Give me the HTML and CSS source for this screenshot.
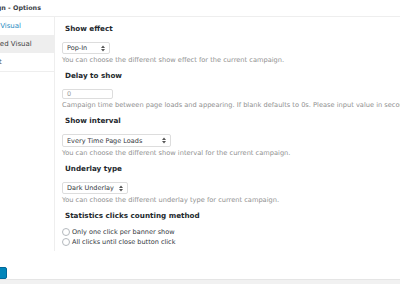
FILE: index.html
```html
<!DOCTYPE html>
<html>
<head>
<meta charset="utf-8">
<link rel="stylesheet" href="styles.css">
</head>
<body>
<div class="box">
  <div class="box-head">Campaign - Options</div>
  <div class="box-body">
    <aside class="tabs">
      <ul class="tab-list">
        <li class="tab tab-link">Simple Visual</li>
        <li class="tab tab-active">Advanced Visual</li>
        <li class="tab">Content</li>
      </ul>
    </aside>
    <main class="panel">
      <section class="field">
        <h4 class="label">Show effect</h4>
        <div class="select w-effect"><span>Pop-In</span><svg class="arrows" viewBox="0 0 4 7" width="4" height="7"><path d="M0 3 L2 0.5 L4 3 Z M0 4 L2 6.5 L4 4 Z" fill="#555"/></svg></div>
        <p class="desc">You can choose the different show effect for the current campaign.</p>
      </section>
      <section class="field">
        <h4 class="label">Delay to show</h4>
        <div class="input w-delay">0</div>
        <p class="desc">Campaign time between page loads and appearing. If blank defaults to 0s. Please input value in seconds.</p>
      </section>
      <section class="field">
        <h4 class="label">Show interval</h4>
        <div class="select w-interval tall"><span>Every Time Page Loads</span><svg class="arrows" viewBox="0 0 4 7" width="4" height="7"><path d="M0 3 L2 0.5 L4 3 Z M0 4 L2 6.5 L4 4 Z" fill="#555"/></svg></div>
        <p class="desc">You can choose the different show interval for the current campaign.</p>
      </section>
      <section class="field">
        <h4 class="label">Underlay type</h4>
        <div class="select w-underlay"><span>Dark Underlay</span><svg class="arrows" viewBox="0 0 4 7" width="4" height="7"><path d="M0 3 L2 0.5 L4 3 Z M0 4 L2 6.5 L4 4 Z" fill="#555"/></svg></div>
        <p class="desc">You can choose the different underlay type for current campaign.</p>
      </section>
      <section class="field">
        <h4 class="label">Statistics clicks counting method</h4>
        <div class="radios">
          <label class="radio"><span class="dot"></span>Only one click per banner show</label>
          <label class="radio"><span class="dot"></span>All clicks until close button click</label>
        </div>
      </section>
    </main>
  </div>
  <div class="box-foot">
    <button class="btn">Save</button>
  </div>
</div>
</body>
</html>
```
FILE: styles.css
```css
html, body {
  margin: 0;
  padding: 0;
}
body {
  background: #f1f1f1;
  font-family: "DejaVu Sans", Verdana, sans-serif;
  overflow: hidden;
  width: 400px;
  height: 284px;
}
.box {
  margin-left: -40px;
  width: 460px;
  height: 279px;
  background: #fff;
  border-bottom: 1px solid #e5e5e5;
  display: flex;
  flex-direction: column;
}
.box-head {
  height: 16px;
  border-bottom: 1px solid #eeeeee;
  padding-left: 10px;
  font-size: 6.4px;
  font-weight: bold;
  color: #3c4146;
  line-height: 16px;
}
.box-body {
  display: flex;
  height: 236px;
}
.tabs {
  width: 94px;
  border-right: 1px solid #eeeeee;
  background: #fff;
}
.tab-list {
  list-style: none;
  margin: 0;
  padding: 0;
  border-bottom: 1px solid #eeeeee;
}
.tab {
  height: 18px;
  line-height: 18px;
  padding-left: 14px;
  font-size: 7px;
  color: #555;
  white-space: nowrap;
}
.tab-link {
  color: #2a8bc2;
}
.tab-active {
  background: #eeeeee;
  color: #444;
}
.panel {
  flex: 1;
  padding: 7px 0 0 7px;
}
.field + .field {
  margin-top: 7px;
}
.label {
  margin: 0 0 8px 3px;
  font-size: 7.2px;
  line-height: 10px;
  font-weight: bold;
  color: #23282d;
}
.select, .input {
  box-sizing: border-box;
  height: 12px;
  border: 1px solid #dddddd;
  border-radius: 2px;
  background: #fff;
  display: flex;
  align-items: center;
  justify-content: space-between;
  padding: 0 4px 0 4px;
  font-size: 6.5px;
  color: #32373c;
  white-space: nowrap;
}
.select.tall {
  height: 13px;
}
.input {
  height: 10px;
  color: #a0a0a0;
}
.w-effect { width: 48px; }
.w-delay { width: 51px; }
.w-interval { width: 109px; }
.w-underlay { width: 66px; }
.arrows {
  display: block;
}
.desc {
  margin: 2px 0 0 0;
  font-size: 6.65px;
  line-height: 8px;
  color: #909090;
  white-space: nowrap;
}
.radios {
  display: flex;
  flex-direction: column;
  margin-top: -2px;
}
.radio {
  display: flex;
  align-items: center;
  gap: 2px;
  height: 10px;
  font-size: 6.5px;
  color: #32373c;
}
.dot {
  box-sizing: border-box;
  width: 8px;
  height: 8px;
  border-radius: 50%;
  border: 1px solid #b4b9be;
  background: #fff;
}
.box-foot {
  padding: 9px 0 0 11px;
}
.btn {
  box-sizing: border-box;
  height: 12px;
  width: 36px;
  padding: 0 0 0 8px;
  border: 1px solid #006799;
  border-radius: 2px;
  background: #0085ba;
  color: #fff;
  font-family: "DejaVu Sans", Verdana, sans-serif;
  font-size: 6px;
  text-align: left;
}
```
